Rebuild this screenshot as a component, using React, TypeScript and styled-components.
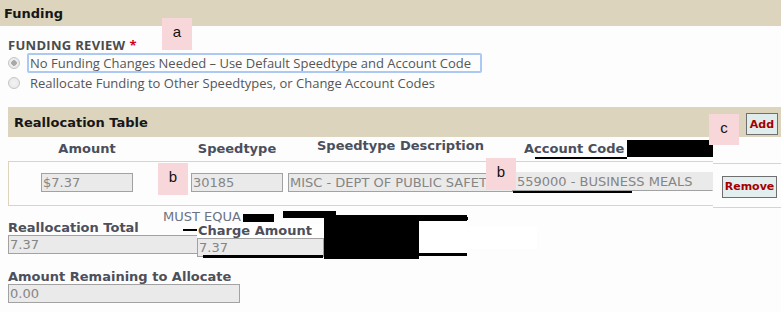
import React from 'react'
import styled, { createGlobalStyle } from 'styled-components'

const GlobalStyle = createGlobalStyle`
    body {
        margin: 0;
        background: #fdfdfd;
    }
`

const TAN = '#dcd4bc'
const VERDANA = `"DejaVu Sans", Verdana, sans-serif`

const Page = styled.div`
    position: relative;
    width: 781px;
    height: 312px;
    overflow: hidden;
    font-family: ${VERDANA};
`

const SectionBar = styled.div<{ $h: number; $pl: number }>`
    display: flex;
    align-items: center;
    justify-content: space-between;
    height: ${p => p.$h}px;
    padding-left: ${p => p.$pl}px;
    background: ${TAN};
    font-weight: bold;
    font-size: 13px;
    color: #161616;
    box-sizing: border-box;
`

const Content = styled.div`
    padding-left: 8px;
`

const ReviewLabel = styled.div`
    margin-top: 12px;
    height: 15px;
    line-height: 15px;
    font: 700 13px/15px "Open Sans", sans-serif;
    color: #4b4b4b;
    letter-spacing: 0.3px;
    span {
        color: #d0021b;
        margin-left: 4px;
    }
`

const RadioRow = styled.div`
    display: flex;
    align-items: center;
    height: 20px;
`

const Radio = styled.span<{ $checked?: boolean }>`
    width: 10px;
    height: 10px;
    border-radius: 50%;
    border: 1px solid #c4c4c4;
    background: radial-gradient(circle, ${p => (p.$checked ? '#a8a8a8 0 2.5px, #ececec 3px' : '#f3f3f3 0, #e6e6e6 100%')});
    margin-right: 7px;
    flex: none;
`

const RadioLabel = styled.span<{ $focus?: boolean }>`
    height: 20px;
    box-sizing: border-box;
    display: flex;
    align-items: center;
    padding: 0 9px 0 1px;
    border: 2px solid ${p => (p.$focus ? '#acc9f3' : 'transparent')};
    border-radius: 2px;
    font: 13px "Open Sans", sans-serif;
    color: #565656;
`

const TablePanel = styled.div`
    margin-top: 14px;
`

const AddButton = styled.button`
    align-self: flex-start;
    margin: 6px 3px 0 0;
    width: 32px;
    height: 22px;
    padding: 0;
    background: #e1ecec;
    border: 1px solid #6f6f6f;
    font: bold 11px ${VERDANA};
    color: #a50000;
`

const COLS = '92px 58px 92px 5px 225px 199px'

const HeadRow = styled.div`
    display: grid;
    grid-template-columns: ${COLS};
    padding-left: 33px;
    height: 24px;
    align-items: center;
`

const ColHead = styled.div<{ $shift?: number; $left?: boolean }>`
    justify-self: ${p => (p.$left ? 'start' : 'center')};
    margin-top: ${p => p.$shift ?? -2}px;
    margin-left: ${p => (p.$left ? 11 : 0)}px;
    display: flex;
    align-items: center;
    font-weight: bold;
    font-size: 13px;
    color: #4a4f5b;
    white-space: nowrap;
`

const Row = styled.div`
    display: flex;
    align-items: flex-start;
`

const RowBox = styled.div`
    display: grid;
    grid-template-columns: ${COLS};
    width: 705px;
    height: 45px;
    box-sizing: border-box;
    padding: 11px 0 0 32px;
    border: 1px solid ${TAN};
    border-right: none;
`

const RemoveCell = styled.div`
    margin-top: 2px;
    width: 68px;
    height: 45px;
    box-sizing: border-box;
    border-top: 1px solid ${TAN};
    border-bottom: 1px solid ${TAN};
    padding: 11px 0 0 9px;
`

const RemoveButton = styled(AddButton)`
    margin: 0;
    width: 55px;
    height: 22px;
    background: #e3eeee;
`

const Field = styled.div<{ $col?: number; $noTop?: boolean }>`
    grid-column: ${p => p.$col ?? 'auto'};
    height: 19px;
    box-sizing: border-box;
    border: 1px solid #a2a2a2;
    border-top-color: ${p => (p.$noTop ? '#eaeaea' : '#a2a2a2')};
    border-right-color: ${p => (p.$noTop ? '#eaeaea' : '#a2a2a2')};
    background: #eaeaea;
    padding-left: 1px;
    font-size: 13px;
    line-height: 17px;
    color: #858585;
    white-space: nowrap;
    overflow: hidden;
`

const NoteLine = styled.div`
    display: flex;
    align-items: flex-start;
    height: 11px;
    margin-top: 2px;
    padding-left: 155px;
    font-size: 13px;
    line-height: 14px;
    color: #6b7283;
`

const Redact = styled.span<{ $w: number; $h: number; $top?: number; $ml?: number; $white?: boolean }>`
    display: block;
    flex: none;
    width: ${p => p.$w}px;
    height: ${p => p.$h}px;
    margin-top: ${p => p.$top ?? 0}px;
    margin-left: ${p => p.$ml ?? 0}px;
    background: ${p => (p.$white ? '#fff' : '#000')};
`

const BottomRow = styled.div`
    display: flex;
    align-items: flex-start;
`

const FieldGroup = styled.div<{ $w: number; $mt?: number }>`
    width: ${p => p.$w}px;
    margin-top: ${p => p.$mt ?? 0}px;
    flex: none;
`

const FieldLabel = styled.div`
    position: relative;
    height: 14px;
    line-height: 13px;
    font-weight: bold;
    font-size: 13px;
    color: #4d4f5a;
    white-space: nowrap;
`

const ChargeLabel = styled(FieldLabel)`
    background: #fff;
    padding-left: 1px;
    &::before {
        content: '';
        position: absolute;
        left: -14px;
        top: 5px;
        width: 14px;
        height: 2px;
        background: #000;
    }
`

const RedactBox = styled.div`
    display: flex;
    margin-top: -6px;
`

const RedactFrame = styled.div`
    width: 48px;
    height: 41px;
    box-sizing: border-box;
    border-top: 6px solid #000;
    border-bottom: 3px solid #000;
    background: #fff;
`

const Note = styled.div<{ $x: number; $y: number; $h?: number }>`
    position: absolute;
    left: ${p => p.$x}px;
    top: ${p => p.$y}px;
    width: 30px;
    height: ${p => p.$h ?? 32}px;
    background: #f8d7da;
    font: 15px "Liberation Sans", Arial, sans-serif;
    color: #111;
    text-align: center;
    padding-top: 5px;
    box-sizing: border-box;
`

const Line = styled.div<{ $x: number; $y: number; $w: number; $h?: number }>`
    position: absolute;
    left: ${p => p.$x}px;
    top: ${p => p.$y}px;
    width: ${p => p.$w}px;
    height: ${p => p.$h ?? 2}px;
    background: #000;
`

export default function App() {
    return (
        <Page>
            <GlobalStyle />
            <SectionBar $h={26} $pl={4}>Funding</SectionBar>
            <Content>
                <ReviewLabel>FUNDING REVIEW<span>*</span></ReviewLabel>
                <RadioRow>
                    <Radio $checked />
                    <RadioLabel $focus>No Funding Changes Needed – Use Default Speedtype and Account Code</RadioLabel>
                </RadioRow>
                <RadioRow>
                    <Radio />
                    <RadioLabel>Reallocate Funding to Other Speedtypes, or Change Account Codes</RadioLabel>
                </RadioRow>

                <TablePanel>
                    <SectionBar $h={30} $pl={6}>
                        Reallocation Table
                        <AddButton>Add</AddButton>
                    </SectionBar>
                    <HeadRow>
                        <ColHead>Amount</ColHead>
                        <ColHead style={{ gridColumn: 3 }}>Speedtype</ColHead>
                        <ColHead $shift={-7} style={{ gridColumn: 5 }}>Speedtype Description</ColHead>
                        <ColHead $left>
                            Account Code
                            <Redact $w={86} $h={17} $ml={3} />
                        </ColHead>
                    </HeadRow>
                    <Row>
                        <RowBox>
                            <Field>$7.37</Field>
                            <Field $col={3}>30185</Field>
                            <Field $col={5}>MISC - DEPT OF PUBLIC SAFETY</Field>
                            <Field $noTop style={{ marginTop: -1, width: 200, paddingLeft: 3 }}>559000 - BUSINESS MEALS</Field>
                        </RowBox>
                        <RemoveCell>
                            <RemoveButton>Remove</RemoveButton>
                        </RemoveCell>
                    </Row>
                </TablePanel>

                <NoteLine>
                    MUST EQUA
                    <Redact $w={31} $h={8} $top={4} $ml={2} />
                    <Redact $w={53} $h={7} $top={1} $ml={9} />
                    <Redact $w={132} $h={3} $top={7} />
                </NoteLine>
                <BottomRow>
                    <FieldGroup $w={189}>
                        <FieldLabel>Reallocation Total</FieldLabel>
                        <Field style={{ borderRight: 'none' }}>7.37</Field>
                    </FieldGroup>
                    <FieldGroup $w={127} $mt={3}>
                        <ChargeLabel>Charge Amount</ChargeLabel>
                        <Field>7.37</Field>
                    </FieldGroup>
                    <RedactBox>
                        <Redact $w={95} $h={44} />
                        <RedactFrame />
                        <Redact $white $w={70} $h={22} $top={12} />
                    </RedactBox>
                </BottomRow>
                <FieldGroup $w={232} $mt={11}>
                    <FieldLabel>Amount Remaining to Allocate</FieldLabel>
                    <Field>0.00</Field>
                </FieldGroup>
            </Content>

            <Line $x={535} $y={157} $w={92} />
            <Line $x={513} $y={191} $w={119} />
            <Line $x={203} $y={255} $w={120} $h={3} />
            <Note $x={162} $y={18}>a</Note>
            <Note $x={158} $y={163}>b</Note>
            <Note $x={486} $y={158}>b</Note>
            <Note $x={709} $y={114} $h={31}>c</Note>
        </Page>
    )
}
